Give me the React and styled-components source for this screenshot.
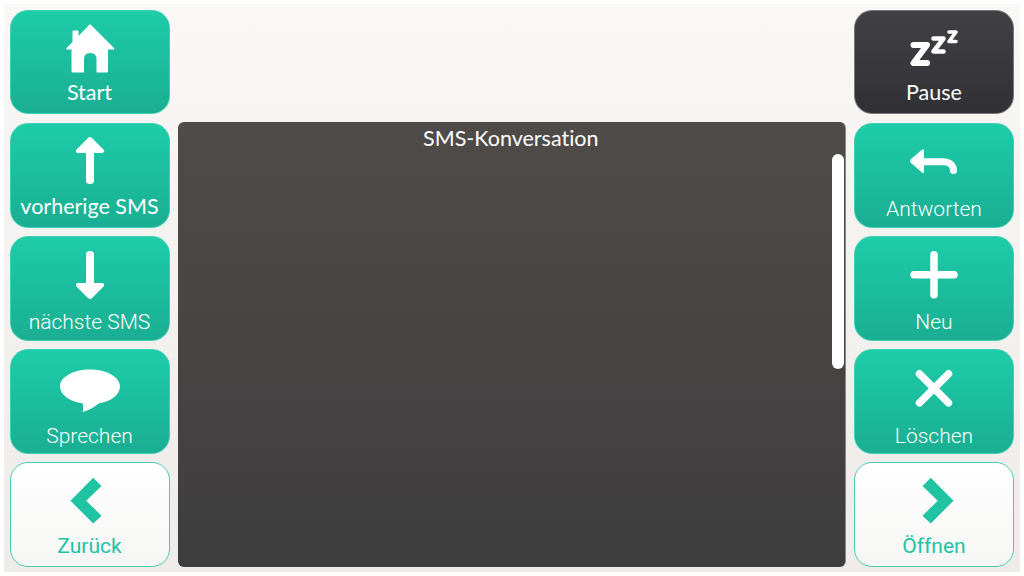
import React from "react"
import styled, { createGlobalStyle, css } from "styled-components"

const GlobalStyle = createGlobalStyle`
  html, body {
    margin: 0;
    background: #fff;
  }
  * {
    box-sizing: border-box;
  }
`

const Icon = ({ children, lift = 0 }) => (
  <IconSvg viewBox={`0 ${lift} 64 48`} fill="currentColor">
    {children}
  </IconSvg>
)

const Line = props => (
  <path
    fill="none"
    stroke="currentColor"
    strokeLinecap="round"
    strokeLinejoin="round"
    {...props}
  />
)

const HomeIcon = () => (
  <Icon>
    <path
      fillRule="evenodd"
      d="M32.5 0.5 L56 24 Q57 25.5 55.5 25.5 H50 V47 Q50 48.5 48.5 48.5 H15 Q13.5 48.5 13.5 47 V25.5 H9 Q7.5 25.5 8.5 24 L14.5 18 V7.5 Q14.5 6.5 15.5 6.5 H19.5 Q20.5 6.5 20.5 7.5 V12 L31.5 0.5 Q32 0 32.5 0.5 Z M26 48.5 H38.5 V35 Q38.5 29 32.2 29 Q26 29 26 35 Z"
    />
  </Icon>
)

const UpIcon = () => (
  <Icon lift={1}>
    <path d="M32 1 Q33 1 34 2 L45.5 13.5 Q47.5 16.5 44 17 H36 V45 Q36 48 32 48 Q28 48 28 45 V17 H20 Q16.5 16.5 18.5 13.5 L30 2 Q31 1 32 1 Z" />
  </Icon>
)

const DownIcon = () => (
  <Icon lift={1}>
    <path d="M32 50 Q33 50 34 49 L45.5 37.5 Q47.5 34.5 44 34 H36 V5.5 Q36 2 32 2 Q28 2 28 5.5 V34 H20 Q16.5 34.5 18.5 37.5 L30 49 Q31 50 32 50 Z" />
  </Icon>
)

const ChatIcon = () => (
  <Icon>
    <path d="M32 6.5 C48.5 6.5 62 14 62 23.5 C62 32 52 39 41 40.3 C36 44.5 30 48 24.5 49 C25.5 46.5 25.5 43.5 24.5 40.2 C12 38.7 2 32 2 23.5 C2 14 15.5 6.5 32 6.5 Z" />
  </Icon>
)

const ChevronLeftIcon = () => (
  <Icon>
    <path d="M12.5 24.7 L35.2 1.7 L43.5 10 L28.2 24.7 L43.5 39.7 L35.2 47.5 Z" />
  </Icon>
)

const ChevronRightIcon = () => (
  <Icon>
    <path d="M51.5 24.7 L28.8 1.7 L20.5 10 L35.8 24.7 L20.5 39.7 L28.8 47.5 Z" />
  </Icon>
)

const SleepIcon = () => (
  <Icon>
    <Line strokeWidth="6" d="M11.5 21 H25 L11.5 39 H25" />
    <Line strokeWidth="4.6" d="M31.5 14.5 H41.5 L31.5 27.5 H41.5" />
    <Line strokeWidth="3.6" d="M47 8 H54 L47 17.5 H54" />
  </Icon>
)

const ReplyIcon = () => (
  <Icon lift={1}>
    <path d="M8 25 Q8 24 9 23 L20 13.8 Q22 12.5 22 15 V36 Q22 38 20 36.6 L9 27 Q8 26 8 25 Z" />
    <Line strokeWidth="7" d="M20 25.7 H41 C47 25.7 51.5 29 51.5 34.5" />
  </Icon>
)

const PlusIcon = () => (
  <Icon lift={1}>
    <Line strokeWidth="7.5" d="M12 25.7 H52 M32 5.7 V45.7" />
  </Icon>
)

const CloseIcon = () => (
  <Icon>
    <Line strokeWidth="7.5" d="M17.5 10.8 L46.5 39.8 M46.5 10.8 L17.5 39.8" />
  </Icon>
)

const Tile = ({ icon, label, variant, drop, thin }) => (
  <Button $variant={variant}>
    {icon}
    <Label $drop={drop} $thin={thin}>
      {label}
    </Label>
  </Button>
)

export default () => (
  <Frame>
    <GlobalStyle />
    <Column>
      <Tile icon={<HomeIcon />} label="Start" drop={8} />
      <Tile icon={<UpIcon />} label="vorherige SMS" drop={9} />
      <Tile icon={<DownIcon />} label="nächste SMS" drop={12} thin />
      <Tile icon={<ChatIcon />} label="Sprechen" drop={13} thin />
      <Tile icon={<ChevronLeftIcon />} label="Zurück" variant="light" drop={10} thin />
    </Column>
    <Conversation>
      <Title>SMS-Konversation</Title>
      <ScrollThumb />
    </Conversation>
    <Column>
      <Tile icon={<SleepIcon />} label="Pause" variant="dark" drop={8} />
      <Tile icon={<ReplyIcon />} label="Antworten" drop={12} thin />
      <Tile icon={<PlusIcon />} label="Neu" drop={12} thin />
      <Tile icon={<CloseIcon />} label="Löschen" drop={13} thin />
      <Tile icon={<ChevronRightIcon />} label="Öffnen" variant="light" drop={10} thin />
    </Column>
  </Frame>
)

const Frame = styled.div`
  width: 1016px;
  height: 568px;
  margin: 4px;
  padding: 5.5px 6px 5px 5.5px;
  display: flex;
  gap: 8px;
  background: linear-gradient(#f9f8f6, #eeebe8);
  font-family: Lato, "Open Sans", sans-serif;
  font-variant-ligatures: none;
`

const Column = styled.div`
  flex: none;
  width: 160px;
  display: flex;
  flex-direction: column;
  gap: 8.15px;
`

const variants = {
  dark: css`
    background: linear-gradient(#404045, #313135);
    border: 1px solid #77777a;
    color: #fff;
  `,
  light: css`
    background: linear-gradient(#fff, #f6f6f5);
    border: 1px solid #45cdb2;
    color: #20c4a3;
    font-weight: 400;
  `,
  primary: css`
    background: linear-gradient(#1dcca8, #1aae93);
    border: 1px solid #3fcfb2;
    color: #fff;
  `
}

const Button = styled.div`
  flex: none;
  height: 104.95px;
  display: flex;
  flex-direction: column;
  align-items: center;
  padding-top: 13px;
  border-radius: 18px;
  font-weight: 300;
  ${({ $variant }) => variants[$variant || "primary"]}
`

const IconSvg = styled.svg`
  display: block;
  flex: none;
  width: 64px;
  height: 48px;
  overflow: visible;
`

const Label = styled.div`
  margin-top: ${({ $drop }) => $drop}px;
  font-size: 21.5px;
  font-weight: 400;
  line-height: 24px;
  white-space: nowrap;
  ${({ $thin }) =>
    $thin &&
    css`
      font-family: Roboto, sans-serif;
      font-size: 21px;
      font-weight: inherit;
    `}
`

const Conversation = styled.div`
  position: relative;
  flex: 1;
  margin-top: 112.5px;
  border-radius: 6px;
  border-right: 1px solid #88868a;
  background: linear-gradient(#4f4b49, #3e3d3e);
  color: #fff;
  text-align: center;
`

const Title = styled.div`
  font-size: 21.5px;
  line-height: 24px;
  padding-top: 4px;
  padding-right: 1px;
`

const ScrollThumb = styled.div`
  position: absolute;
  top: 32px;
  right: 1px;
  width: 12px;
  height: 215px;
  border-radius: 6px;
  background: #fff;
`
